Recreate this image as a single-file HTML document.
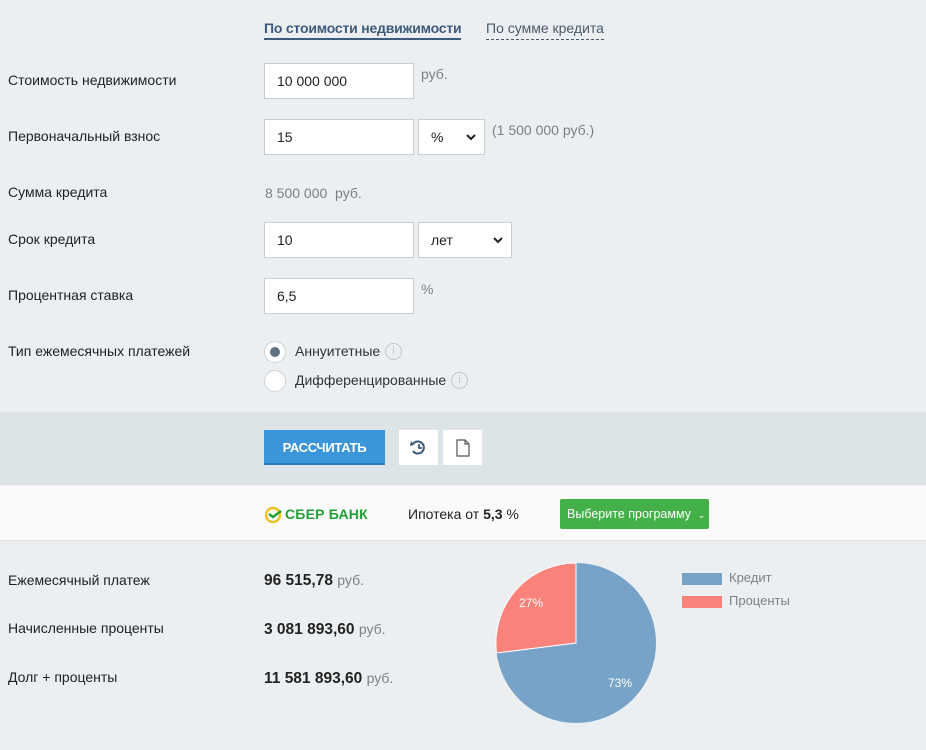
<!DOCTYPE html>
<html><head><meta charset="utf-8"><style>
*{margin:0;padding:0;box-sizing:border-box}
body{width:926px;height:750px;background:#eceff1;font-family:"Liberation Sans","DejaVu Sans",sans-serif;font-size:14px;color:#222;position:relative;overflow:hidden}
.a{position:absolute}
.lbl{left:8px;font-size:14px;color:#222}
.inp{background:#fff;border:1px solid #c8cdd0;height:36px;padding:0 12px;line-height:34px;font-size:14px}
.g{color:#7a8288;font-size:14px}
.chev{position:absolute;right:8px;top:13px}
</style></head><body>
<div class="a" style="left:264px;top:20px;font-weight:bold;color:#3d5a7a;font-size:14px;border-bottom:2px solid #3d5a7a;padding-bottom:2px;letter-spacing:-0.2px">По стоимости недвижимости</div>
<div class="a" style="left:486px;top:20px;color:#4a5a6a;font-size:14px;border-bottom:1px dashed #4a5a6a;padding-bottom:3px">По сумме кредита</div>

<div class="a lbl" style="top:72px">Стоимость недвижимости</div>
<div class="a inp" style="left:264px;top:63px;width:150px">10 000 000</div>
<div class="a g" style="left:421px;top:66px">руб.</div>

<div class="a lbl" style="top:128px">Первоначальный взнос</div>
<div class="a inp" style="left:264px;top:119px;width:150px">15</div>
<div class="a inp" style="left:418px;top:119px;width:67px">%<svg class="chev" width="10" height="8"><path d="M1 2l4 4 4-4" fill="none" stroke="#222" stroke-width="2"/></svg></div>
<div class="a g" style="left:492px;top:122px">(1 500 000 руб.)</div>

<div class="a lbl" style="top:184px">Сумма кредита</div>
<div class="a g" style="left:265px;top:185px">8 500 000 &nbsp;руб.</div>

<div class="a lbl" style="top:231px">Срок кредита</div>
<div class="a inp" style="left:264px;top:222px;width:150px">10</div>
<div class="a inp" style="left:418px;top:222px;width:94px">лет<svg class="chev" width="10" height="8"><path d="M1 2l4 4 4-4" fill="none" stroke="#222" stroke-width="2"/></svg></div>

<div class="a lbl" style="top:287px">Процентная ставка</div>
<div class="a inp" style="left:264px;top:278px;width:150px">6,5</div>
<div class="a g" style="left:421px;top:281px">%</div>

<div class="a lbl" style="top:343px">Тип ежемесячных платежей</div>
<div class="a" style="left:264px;top:341px;width:22px;height:22px;border-radius:50%;background:#fff;border:1px solid #d0d4d6"><div style="margin:5px;width:10px;height:10px;border-radius:50%;background:#5e7286"></div></div>
<div class="a" style="left:295px;top:343px;color:#333">Аннуитетные</div>
<div class="a" style="left:385px;top:343px;width:17px;height:17px;border-radius:50%;border:1px solid #c4c8ca;color:#c4c8ca;font-size:11px;text-align:center;line-height:15px">i</div>
<div class="a" style="left:264px;top:370px;width:22px;height:22px;border-radius:50%;background:#fff;border:1px solid #d0d4d6"></div>
<div class="a" style="left:295px;top:372px;color:#333">Дифференцированные</div>
<div class="a" style="left:451px;top:372px;width:17px;height:17px;border-radius:50%;border:1px solid #c4c8ca;color:#c4c8ca;font-size:11px;text-align:center;line-height:15px">i</div>

<div class="a" style="left:0;top:412px;width:926px;height:73px;background:#dde4e7"></div>
<div class="a" style="left:264px;top:430px;width:121px;height:35px;background:#3b95d9;border-bottom:2px solid #2b7bbd;color:#fff;font-weight:bold;font-size:13px;text-align:center;line-height:35px;letter-spacing:-0.3px">РАССЧИТАТЬ</div>
<div class="a" style="left:399px;top:430px;width:39px;height:35px;background:#fff"><svg width="39" height="35"><path d="M14 14 A6 6 0 1 1 14 21" fill="none" stroke="#3d5a7a" stroke-width="2"/><path d="M12 11 L15 15 L11 16Z" fill="#3d5a7a"/><path d="M20 14v4h3" fill="none" stroke="#3d5a7a" stroke-width="1.8"/></svg></div>
<div class="a" style="left:443px;top:430px;width:39px;height:35px;background:#fff"><svg width="39" height="35"><path d="M14 10h8l4 4v12h-12z M22 10v4h4" fill="none" stroke="#555" stroke-width="1.2"/></svg></div>

<div class="a" style="left:0;top:486px;width:926px;height:55px;background:#fafafa;border-bottom:1px solid #dde1e3"></div>
<svg class="a" style="left:264px;top:506px" width="18" height="18"><circle cx="9" cy="9" r="7" fill="none" stroke="#f0c020" stroke-width="2.4"/><path d="M5 8l4 3 8-6" fill="none" stroke="#21a038" stroke-width="2.4"/></svg>
<div class="a" style="left:285px;top:506px;font-weight:bold;color:#21a038;font-size:14px;letter-spacing:0.2px">СБЕР БАНК</div>
<div class="a" style="left:408px;top:506px;color:#222">Ипотека от <b>5,3</b> %</div>
<div class="a" style="left:560px;top:499px;width:149px;height:30px;background:#43b049;border-radius:2px;color:#fff;font-size:12.5px;line-height:30px;padding-left:7px;white-space:nowrap">Выберите программу &nbsp;<span style="font-size:9px">&#8964;</span></div>

<div class="a lbl" style="top:572px">Ежемесячный платеж</div>
<div class="a" style="left:264px;top:572px;font-size:15.5px"><b>96 515,78</b> <span class="g">руб.</span></div>
<div class="a lbl" style="top:620px">Начисленные проценты</div>
<div class="a" style="left:264px;top:621px;font-size:15.5px"><b>3 081 893,60</b> <span class="g">руб.</span></div>
<div class="a lbl" style="top:669px">Долг + проценты</div>
<div class="a" style="left:264px;top:670px;font-size:15.5px"><b>11 581 893,60</b> <span class="g">руб.</span></div>

<svg class="a" style="left:490px;top:557px" width="172" height="172">
<circle cx="86" cy="86" r="80" fill="#78a3c8"/>
<path d="M86 86 L86 6 A80 80 0 0 0 6.6 96 Z" fill="#f9837a" stroke="#fff" stroke-width="1"/>
<line x1="86" y1="86" x2="86" y2="6" stroke="#fff"/>
<text x="29" y="50" fill="#fff" font-size="12" font-family="Liberation Sans">27%</text>
<text x="118" y="130" fill="#fff" font-size="12" font-family="Liberation Sans">73%</text>
</svg>
<div class="a" style="left:682px;top:573px;width:40px;height:12px;background:#78a3c8"></div>
<div class="a g" style="left:729px;top:570px;font-size:13px">Кредит</div>
<div class="a" style="left:682px;top:596px;width:40px;height:12px;background:#f9837a"></div>
<div class="a g" style="left:729px;top:593px;font-size:13px">Проценты</div>
</body></html>
